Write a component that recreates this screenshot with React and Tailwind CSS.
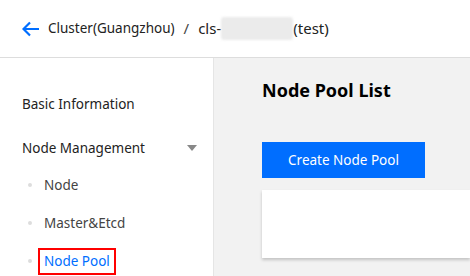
import React from "react";

// Sidebar entry for the node management sub-menu
function SubItem({ label, active }) {
  return (
    <div className="flex items-center h-[38px]">
      <span className="w-[4px] h-[4px] rounded-full bg-[#ddd] ml-[28px] mr-[12px]" />
      {active ? (
        <span className="border-2 border-[#f00] px-[4px] h-[27px] flex items-center text-[#006eff] -ml-[6px]">
          {label}
        </span>
      ) : (
        <span className="text-[#444]">{label}</span>
      )}
    </div>
  );
}

export default function App() {
  return (
    <div
      className="w-[470px] h-[276px] overflow-hidden flex flex-col bg-white text-[13.5px]"
      style={{ fontFamily: '"Noto Sans", "Open Sans", sans-serif' }}
    >
      {/* header */}
      <div className="h-[58px] shrink-0 flex items-center border-b border-[#ddd] pl-[22px]">
        <svg width="18" height="16" viewBox="0 0 18 16" className="mr-[8px]">
          <path d="M17 8H2M8 1.5L1.5 8L8 14.5" fill="none" stroke="#006eff" strokeWidth="2.2" />
        </svg>
        <span className="text-[13.5px] text-[#222]">Cluster(Guangzhou)</span>
        <span className="text-[15px] text-[#444] mx-[9px]">/</span>
        <span className="text-[15px] text-[#222]">cls-</span>
        <span className="w-[72px] h-[23px] bg-[#ebebeb] rounded-[3px] blur-[1px]" />
        <span className="text-[15px] text-[#222]">(test)</span>
      </div>
      <div className="flex flex-1">
        {/* sidebar */}
        <div className="w-[214px] shrink-0 border-r border-[#e5e5e5] pt-[31px]">
          <div className="h-[30px] flex items-center pl-[22px] text-[#222]">Basic Information</div>
          <div className="h-[30px] flex items-center justify-between pl-[22px] pr-[16px] mt-[14px] text-[#222]">
            <span>Node Management</span>
            <svg width="10" height="6" viewBox="0 0 10 6">
              <path d="M0 0H10L5 6Z" fill="#888" />
            </svg>
          </div>
          <div className="mt-[3px]">
            <SubItem label="Node" />
            <SubItem label="Master&Etcd" />
            <SubItem label="Node Pool" active />
          </div>
        </div>
        {/* main */}
        <div className="flex-1 bg-[#f2f2f2] pl-[48px] pt-[20px]">
          <h1 className="text-[18px] font-bold text-black h-[24px] leading-[24px]">Node Pool List</h1>
          <button className="mt-[40px] w-[163px] h-[36px] bg-[#006eff] text-white text-[13.5px]">
            Create Node Pool
          </button>
          <div className="mt-[12px] h-[68px] bg-white shadow-[0_2px_3px_rgba(0,0,0,0.2)]" />
        </div>
      </div>
    </div>
  );
}
